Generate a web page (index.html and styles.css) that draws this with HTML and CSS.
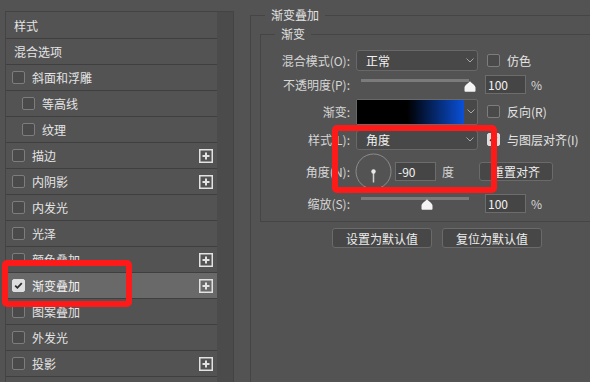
FILE: index.html
```html
<!DOCTYPE html>
<html>
  <head>
    <meta charset="utf-8" />
    <title>图层样式</title>
    <link rel="stylesheet" href="styles.css">
  </head>
  <body>
    <div class="page">
      <!-- left: list of layer styles -->
      <div class="styles-panel">
        <div class="style-list">
          <div class="style-row plain">样式</div>
          <div class="style-row plain">混合选项</div>
          <div class="style-row"><span class="check"></span>斜面和浮雕</div>
          <div class="style-row sub"><span class="check"></span>等高线</div>
          <div class="style-row sub"><span class="check"></span>纹理</div>
          <div class="style-row">
            <span class="check"></span>描边
            <svg class="add" width="14" height="14" viewBox="0 0 14 14"><rect x="0.75" y="0.75" width="12.5" height="12.5" /><path d="M7 3.5v7M3.5 7h7" /></svg>
          </div>
          <div class="style-row">
            <span class="check"></span>内阴影
            <svg class="add" width="14" height="14" viewBox="0 0 14 14"><rect x="0.75" y="0.75" width="12.5" height="12.5" /><path d="M7 3.5v7M3.5 7h7" /></svg>
          </div>
          <div class="style-row"><span class="check"></span>内发光</div>
          <div class="style-row"><span class="check"></span>光泽</div>
          <div class="style-row">
            <span class="check"></span>颜色叠加
            <svg class="add" width="14" height="14" viewBox="0 0 14 14"><rect x="0.75" y="0.75" width="12.5" height="12.5" /><path d="M7 3.5v7M3.5 7h7" /></svg>
          </div>
          <div class="style-row active">
            <span class="check on"><svg width="11" height="11" viewBox="0 0 11 11"><path d="M2.2 5.6l2.2 2.2 4.4-4.6" /></svg></span>渐变叠加
            <svg class="add" width="14" height="14" viewBox="0 0 14 14"><rect x="0.75" y="0.75" width="12.5" height="12.5" /><path d="M7 3.5v7M3.5 7h7" /></svg>
          </div>
          <div class="style-row"><span class="check"></span>图案叠加</div>
          <div class="style-row"><span class="check"></span>外发光</div>
          <div class="style-row">
            <span class="check"></span>投影
            <svg class="add" width="14" height="14" viewBox="0 0 14 14"><rect x="0.75" y="0.75" width="12.5" height="12.5" /><path d="M7 3.5v7M3.5 7h7" /></svg>
          </div>
          <div class="style-row"></div>
        </div>
        <div class="scroll-track"></div>
      </div>

      <!-- right: gradient overlay settings -->
      <div class="settings">
        <fieldset class="group outer">
          <legend>渐变叠加</legend>
          <fieldset class="group inner">
            <legend>渐变</legend>

            <div class="form-row r1">
              <label>混合模式(<u>O</u>):</label>
              <div class="select">正常<svg class="chev" width="8" height="5" viewBox="0 0 8 5"><path d="M0.5 0.5l3.5 3.5 3.5-3.5" /></svg></div>
              <div class="opt"><span class="check"></span><span>仿色</span></div>
            </div>

            <div class="form-row r2">
              <label>不透明度(<u>P</u>):</label>
              <div class="slider">
                <div class="track"></div>
                <svg class="thumb" style="left: 108px" width="12" height="11" viewBox="0 0 12 11"><path d="M6 0.3C7.5 2 11.5 4.5 11.5 6.5V9.8Q11.5 10.7 10.6 10.7H1.4Q0.5 10.7 0.5 9.8V6.5C0.5 4.5 4.5 2 6 0.3Z" /></svg>
              </div>
              <input class="num" type="text" value="100" />
              <span class="unit">%</span>
            </div>

            <div class="form-row r3">
              <label>渐变:</label>
              <div class="gradient">
                <div class="gradient-fill"></div>
                <div class="gradient-arrow"><svg class="chev" width="8" height="5" viewBox="0 0 8 5"><path d="M0.5 0.5l3.5 3.5 3.5-3.5" /></svg></div>
              </div>
              <div class="opt"><span class="check"></span><span>反向(<u>R</u>)</span></div>
            </div>

            <div class="form-row r4">
              <label>样式(<u>L</u>):</label>
              <div class="select">角度<svg class="chev" width="8" height="5" viewBox="0 0 8 5"><path d="M0.5 0.5l3.5 3.5 3.5-3.5" /></svg></div>
              <div class="opt"><span class="check on"><svg width="11" height="11" viewBox="0 0 11 11"><path d="M2.2 5.6l2.2 2.2 4.4-4.6" /></svg></span><span>与图层对齐(<u>I</u>)</span></div>
            </div>

            <div class="form-row r5">
              <label>角度(<u>N</u>):</label>
              <svg class="dial" width="37" height="37" viewBox="0 0 37 37">
                <circle cx="18.5" cy="18.5" r="17.5" />
                <path d="M18.5 18.5v11" />
                <circle class="dot" cx="18.5" cy="18.5" r="2.2" />
              </svg>
              <input class="num angle" type="text" value="-90" />
              <span class="unit deg">度</span>
              <button class="btn small">重置对齐</button>
            </div>

            <div class="form-row r6">
              <label>缩放(<u>S</u>):</label>
              <div class="slider">
                <div class="track"></div>
                <svg class="thumb" style="left: 65px" width="12" height="11" viewBox="0 0 12 11"><path d="M6 0.3C7.5 2 11.5 4.5 11.5 6.5V9.8Q11.5 10.7 10.6 10.7H1.4Q0.5 10.7 0.5 9.8V6.5C0.5 4.5 4.5 2 6 0.3Z" /></svg>
              </div>
              <input class="num" type="text" value="100" />
              <span class="unit">%</span>
            </div>
          </fieldset>

          <div class="actions">
            <button class="btn">设置为默认值</button>
            <button class="btn">复位为默认值</button>
          </div>
        </fieldset>
      </div>

      <!-- red annotation boxes -->
      <div class="mark mark-row"></div>
      <div class="mark mark-style"></div>
    </div>
  </body>
</html>
```

FILE: styles.css
```css
/* Page */
html,
body {
  margin: 0;
  height: 100%;
  overflow: hidden;
}
body {
  background-color: #535353;
  color: #e4e4e4;
  font-family: "Noto Sans CJK SC", "Noto Sans", sans-serif;
  font-size: 12px;
}
.page {
  position: relative;
  display: flex;
  height: 100%;
}
u {
  text-decoration: none;
}

/* Left style list */
.styles-panel {
  display: flex;
  margin: 11px 0 0 5px;
  border: 1px solid #444444;
  border-bottom: none;
}
.style-list {
  width: 211px;
  padding-top: 1px;
}
.style-row {
  box-sizing: border-box;
  height: 26px;
  border-bottom: 1px solid #3f3f3f;
  display: flex;
  align-items: center;
  padding: 0 4px 0 6px;
  gap: 7px;
}
.style-row.plain {
  padding-left: 8px;
}
.style-row.sub {
  padding-left: 16px;
}
.style-row.active {
  background-color: #696969;
  color: #f4f4f4;
}
.scroll-track {
  width: 16px;
  background-color: #4b4b4b;
}

/* Checkbox */
.check {
  box-sizing: border-box;
  width: 13px;
  height: 13px;
  border: 1px solid #7d7d7d;
  border-radius: 2px;
  background-color: #4a4a4a;
  display: inline-flex;
  align-items: center;
  justify-content: center;
  flex: none;
}
.check.on {
  background-color: #dedede;
  border-color: #dedede;
}
.check.on path {
  fill: none;
  stroke: #2b2b2b;
  stroke-width: 1.8;
}

/* Add button */
.add {
  margin-left: auto;
}
.add rect,
.add path {
  fill: none;
  stroke: #e2e2e2;
  stroke-width: 1.5;
}
.add path {
  stroke-width: 2;
}

/* Right settings */
.settings {
  margin: 7px 0 0 16px;
}
.group {
  border: 1px solid #454545;
  margin: 0;
  padding: 0;
  min-width: 0;
}
.group legend {
  line-height: 16px;
  padding: 0 6px;
  color: #e2e2e2;
}
.outer {
  width: 380px;
  height: 420px;
}
.outer > legend {
  margin-left: 14px;
}
.inner {
  width: 360px;
  margin: 3px 0 0 9px;
  padding: 6px 0 6px 0;
}
.inner > legend {
  margin-left: 14px;
}

.form-row {
  display: flex;
  align-items: center;
}
.form-row label {
  width: 89px;
  margin-right: 6px;
  text-align: right;
  color: #d6d6d6;
  flex: none;
}
.r1 { height: 25px; }
.r2 { height: 23px; }
.r3 { height: 31px; }
.r4 { height: 25px; }
.r5 { height: 39px; }
.r6 { height: 24px; }

.chev path {
  fill: none;
  stroke: #a8a8a8;
  stroke-width: 1;
}
.select {
  box-sizing: border-box;
  width: 122px;
  height: 21px;
  border: 1px solid #686868;
  border-radius: 3px;
  background-color: #484848;
  display: flex;
  align-items: center;
  justify-content: space-between;
  padding: 0 3px 0 9px;
  color: #f0f0f0;
}
.r4 .select {
  height: 20px;
}
.opt {
  display: flex;
  align-items: center;
  gap: 7px;
  margin-left: 9px;
  color: #e4e4e4;
  white-space: nowrap;
}

/* Slider */
.slider {
  position: relative;
  width: 122px;
  height: 100%;
}
.track {
  margin: 6px 0 0 5px;
  width: 108px;
  height: 3px;
  background-color: #7b7b7b;
}
.thumb {
  position: absolute;
  top: 8px;
}
.thumb path {
  fill: #f4f4f4;
}
.num {
  box-sizing: border-box;
  width: 41px;
  height: 19px;
  margin-left: 7px;
  border: 1px solid #6c6c6c;
  background-color: #454545;
  color: #f2f2f2;
  font: inherit;
  padding: 0 2px;
  outline: none;
}
.unit {
  margin-left: 5px;
  color: #d6d6d6;
}

/* Gradient preview */
.gradient {
  box-sizing: border-box;
  display: flex;
  width: 122px;
  height: 26px;
  border: 1px solid #686868;
  border-radius: 2px;
  background-color: #484848;
}
.gradient-fill {
  flex: 1;
  background: linear-gradient(to right, #000000 47%, #0a50d8 100%);
}
.gradient-arrow {
  width: 13px;
  display: flex;
  align-items: center;
  justify-content: center;
}

/* Angle dial */
.dial {
  margin-left: -1px;
}
.dial circle {
  fill: none;
  stroke: #8c8c8c;
  stroke-width: 1;
}
.dial path {
  stroke: #cfcfcf;
  stroke-width: 1.5;
}
.dial .dot {
  fill: #e8e8e8;
  stroke: none;
}
.num.angle {
  margin-left: 3px;
}
.unit.deg {
  margin-left: 6px;
}

/* Buttons */
.btn {
  box-sizing: border-box;
  width: 100px;
  height: 20px;
  border: 1px solid #6a6a6a;
  border-radius: 3px;
  background-color: #474747;
  color: #ececec;
  font: inherit;
  padding: 0;
}
.btn.small {
  width: 74px;
  height: 19px;
  margin-left: 25px;
}
.actions {
  display: flex;
  gap: 10px;
  margin: 6px 0 0 81px;
}

/* Red annotation boxes */
.mark {
  position: absolute;
  box-sizing: border-box;
  border: 6px solid #ff1a1a;
  border-radius: 5px;
}
.mark-row {
  left: 2px;
  top: 260px;
  width: 130px;
  height: 47px;
}
.mark-style {
  left: 332px;
  top: 125px;
  width: 165px;
  height: 68px;
}
```
